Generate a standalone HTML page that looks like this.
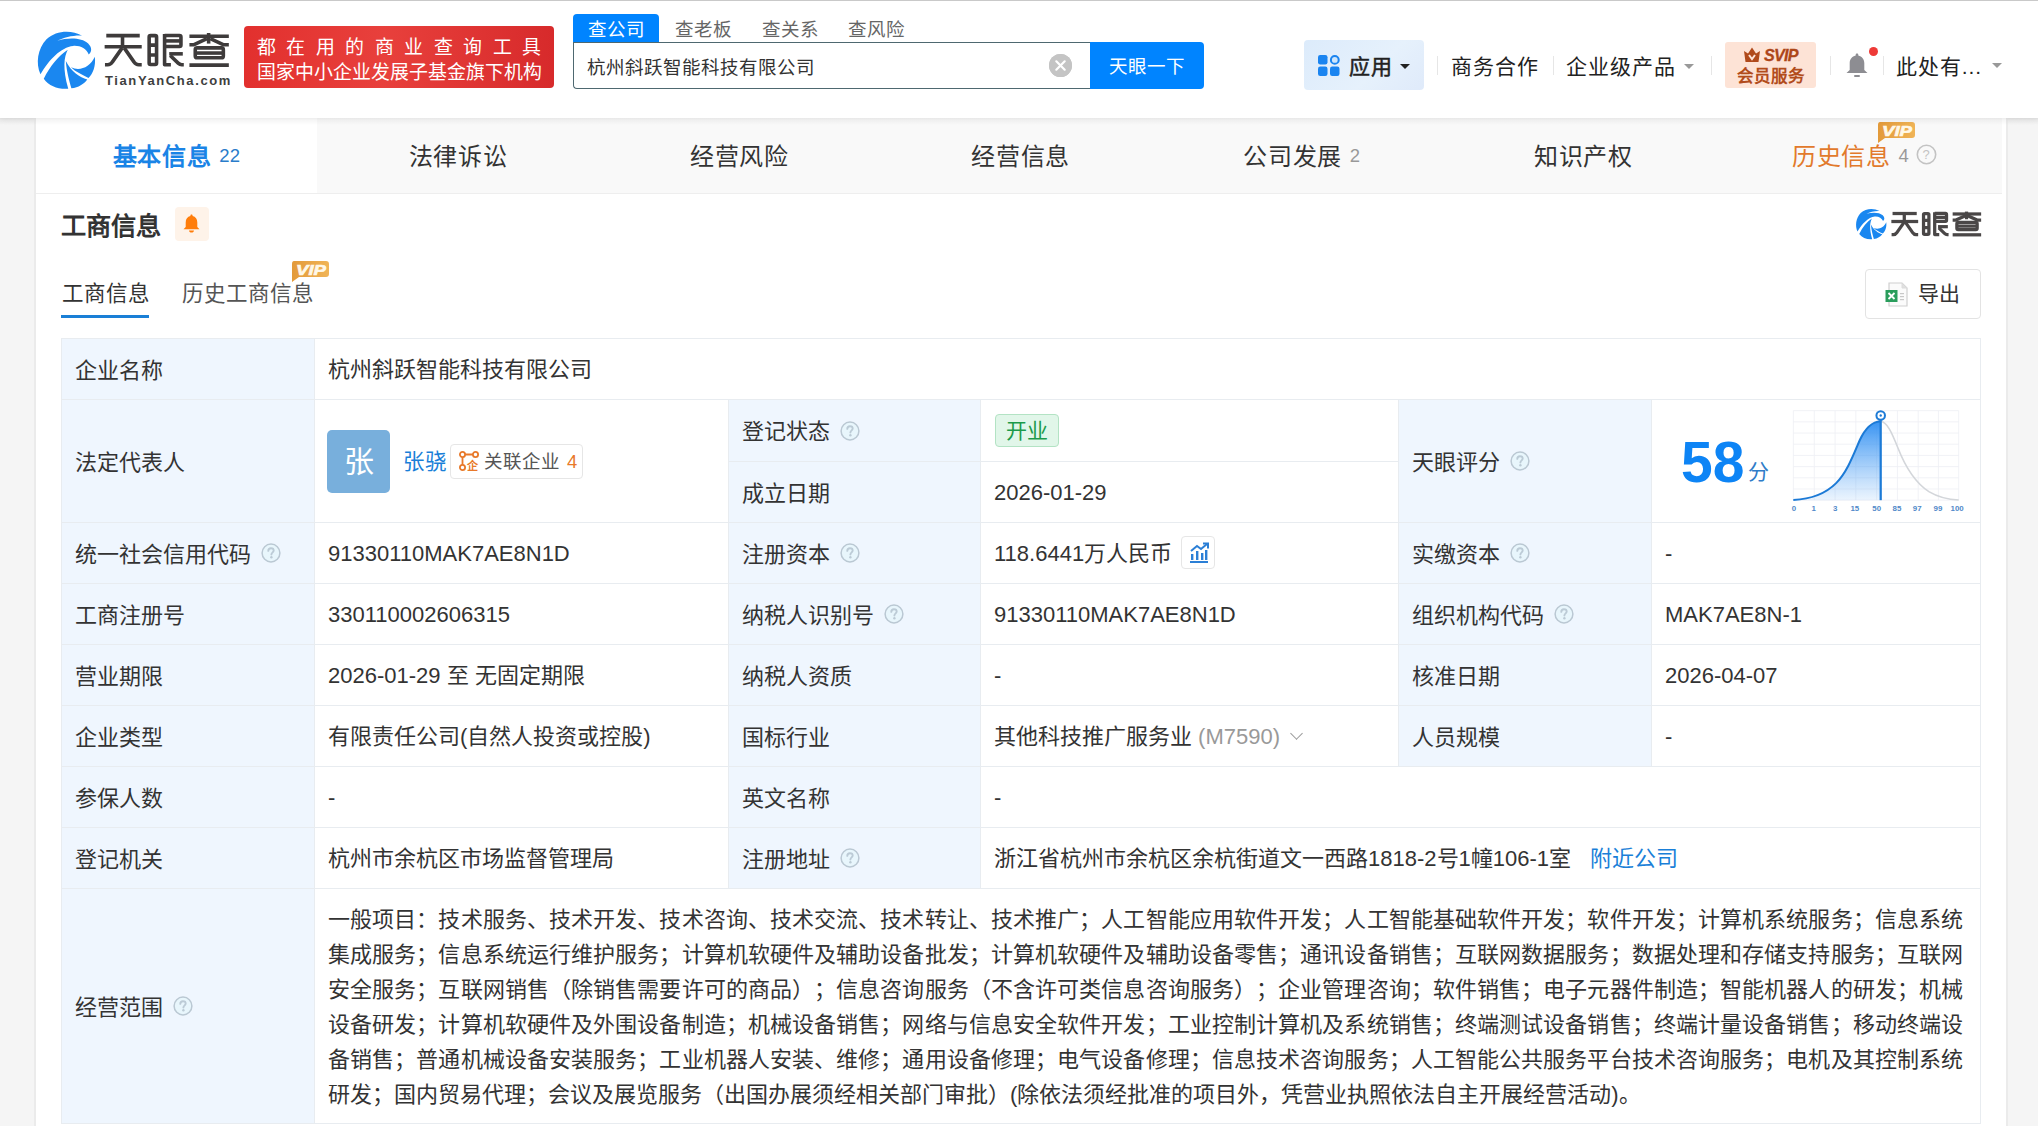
<!DOCTYPE html>
<html lang="zh-CN"><head><meta charset="utf-8">
<style>
*{margin:0;padding:0;box-sizing:border-box}
html,body{text-spacing-trim:space-all;width:2038px;height:1126px;overflow:hidden;background:#f5f5f5;font-family:"Liberation Sans",sans-serif;color:#333}
.abs{position:absolute}
#hdr{position:absolute;left:0;top:0;width:2038px;height:118px;background:#fff;border-top:1px solid #c9c9c9;box-shadow:0 2px 6px rgba(0,0,0,0.06)}
.brand{position:absolute;left:104px;top:25px;font-size:34px;font-weight:bold;color:#3e3e3e;letter-spacing:5.5px;line-height:50px;white-space:nowrap;transform:scaleX(1.08);transform-origin:0 0}
.brand-en{position:absolute;left:105px;top:73px;font-size:13px;font-weight:bold;color:#3e3e3e;letter-spacing:1.6px;line-height:16px;white-space:nowrap}
.banner{position:absolute;left:244px;top:26px;width:310px;height:62px;border-radius:4px;background:linear-gradient(90deg,#e2302e,#e8403c 45%,#d72a2b);color:#fff;font-size:18.9px;line-height:25px}
.banner .l1{position:absolute;left:13px;top:33px;width:284px;text-align:justify;text-align-last:justify;white-space:nowrap}
.stab{position:absolute;top:14px;height:28px;font-size:18.5px;line-height:31px;color:#666;white-space:nowrap}
.stab.on{background:#0084ff;color:#fff;border-radius:4px 4px 0 0;width:86px;text-align:center}
.search{position:absolute;left:573px;top:42px;width:518px;height:47px;border:1px solid #4e6870;border-right:none;border-radius:0 0 0 4px;background:#fff}
.search .txt{position:absolute;left:13px;top:1px;line-height:47px;font-size:18.5px;color:#333;white-space:nowrap}
.clear{position:absolute;left:1049px;top:54px;width:23px;height:23px;border-radius:50%;background:#c3c3c3}
.btn{position:absolute;left:1090px;top:42px;width:114px;height:47px;background:#0084ff;border-radius:0 4px 4px 0;color:#fff;font-size:18.5px;line-height:49px;text-align:center;letter-spacing:0px}
.nav{position:absolute;top:41px;height:50px;line-height:52px;font-size:21px;letter-spacing:0.9px;color:#222;white-space:nowrap}
.sep{position:absolute;top:56px;width:1px;height:19px;background:#e6e6e6}
.tri{position:absolute;width:0;height:0;border-left:5px solid transparent;border-right:5px solid transparent;border-top:5px solid #999}

#card{position:absolute;left:34px;top:118px;width:1974px;height:1010px;background:#fff;border-left:2px solid #ebebeb;border-right:2px solid #ebebeb}
.tabs{position:absolute;left:36px;top:118px;width:1966px;height:76px;background:#f9f9f9;border-bottom:1px solid #eeeeee}
.tab{position:absolute;top:0;height:75px;width:281.3px;line-height:77px;text-align:center;font-size:24px;letter-spacing:0.6px;color:#333;white-space:nowrap}
.tab.on{background:#fff;color:#1a84e6;font-weight:bold}
.tab .n{font-size:18.5px;font-weight:normal;color:#999;margin-left:8px;position:relative;top:-3.5px;letter-spacing:0.3px}
.tab.on .n{color:#2a7cca}

.sec-title{position:absolute;left:61px;top:206px;font-size:25.2px;font-weight:bold;color:#333;line-height:40px;white-space:nowrap}
.bellbox{position:absolute;left:175px;top:207px;width:34px;height:34px;border-radius:4px;background:#fef3e9}
.subtab{position:absolute;top:274px;line-height:40px;font-size:21.5px;color:#333;white-space:nowrap}
.uline{position:absolute;left:61px;top:315px;width:88px;height:3px;background:#1a7fd6}
.export{position:absolute;left:1865px;top:269px;width:116px;height:50px;border:1px solid #e3e3e3;border-radius:4px;background:#fff}
.export .t{position:absolute;left:52px;top:0;line-height:48px;font-size:21px;color:#333}

/* table */
.cell{position:absolute;border:1px solid #e8ecf0;font-size:22px;line-height:28px;color:#333;white-space:nowrap;display:flex;align-items:center}
.lab{background:#eff6fe;padding-left:13px;padding-top:3px}
.val{background:#fff;padding-left:13px;padding-top:2.5px}
.q{display:inline-block;width:20px;height:20px;margin-left:10px;position:relative;top:-1.5px}
.badge{display:inline-block;position:relative;top:-1px;left:1px;height:33px;line-height:31px;padding:0 10px;border:1px solid #b3e3c4;background:#e1f6e9;color:#1c9a4a;border-radius:4px;font-size:21px}
.trend{display:inline-block;position:relative;top:-1.5px;width:34px;height:33px;border:1px solid #e6e6e6;border-radius:4px;margin-left:9px}
.gray{color:#999}
.chev{display:inline-block;width:9px;height:9px;border-right:1.6px solid #999;border-bottom:1.6px solid #999;transform:rotate(45deg);margin-left:12px;position:relative;top:-4px}
.link{color:#1a7fd8;margin-left:19px}
.scope{position:absolute;left:328px;top:902px;width:1635px;font-size:22px;line-height:35px;color:#333}
.scope div{text-align:justify;text-align-last:justify;white-space:nowrap;height:35px}
.scope div.last{text-align-last:left}
</style></head>
<body>
<div id="hdr"></div>
<!-- logo -->
<svg class="abs" style="left:32px;top:26px" width="68" height="68" viewBox="0 0 1126 1126">
 <g fill="#1a87f0">
  <path d="M140,800 C60,620 90,380 240,220 C400,70 650,60 830,160 C700,150 520,190 420,245 C600,190 820,190 930,290 C990,350 1000,420 940,470 C900,380 800,320 680,330 C480,350 280,560 140,800 Z"/>
  <path d="M195,872 C300,660 440,490 592,392 C530,510 505,700 600,1038 C430,1050 285,995 195,872 Z"/>
  <path d="M560,580 C575,760 615,900 652,1032 C770,1020 860,960 915,885 C790,850 650,760 560,580 Z"/>
  <path d="M645,685 C790,750 960,690 1040,510 C1060,660 1010,790 935,862 C830,810 720,760 645,685 Z"/>
 </g>
</svg>
<svg class="abs" style="left:100px;top:28px" width="135" height="44" viewBox="0 0 2038 664"><g fill="none" stroke="#3e3b3b" stroke-width="54" stroke-linejoin="round">
 <path d="M95,115 H600"/>
 <path d="M70,282 H630"/>
 <path d="M340,90 V290"/>
 <path d="M335,300 L185,515 Q160,555 115,555 H75"/>
 <path d="M365,300 L515,515 Q540,555 585,555 H630"/>
 <rect x="742" y="115" width="112" height="435" rx="22"/>
 <path d="M742,258 H854 M742,408 H854"/>
 <path d="M975,90 V555 H1070"/>
 <path d="M975,112 H1200 Q1222,112 1222,134 V255 Q1222,278 1200,278 H975"/>
 <path d="M975,195 H1222"/>
 <path d="M1045,390 H1250"/>
 <path d="M1060,415 L1180,530 Q1205,555 1235,555 H1265"/>
 <path d="M1350,125 H1945"/>
 <path d="M1640,75 V235"/>
 <path d="M1615,160 L1420,252 H1350"/>
 <path d="M1665,160 L1860,252 H1945"/>
 <rect x="1438" y="300" width="424" height="150" rx="28"/>
 <path d="M1438,378 H1862"/>
 <path d="M1350,560 H1945"/>
</g></svg>
<div class="brand-en">TianYanCha.com</div>
<div class="banner"><div class="l1" style="top:9px">都在用的商业查询工具</div><div class="l1" style="top:34px">国家中小企业发展子基金旗下机构</div></div>

<div class="stab on" style="left:573px">查公司</div>
<div class="stab" style="left:675px">查老板</div>
<div class="stab" style="left:762px">查关系</div>
<div class="stab" style="left:848px">查风险</div>
<div class="search"><div class="txt">杭州斜跃智能科技有限公司</div></div>
<div class="clear"></div>
<div class="btn">天眼一下</div>

<div class="abs" style="left:1304px;top:40px;width:120px;height:50px;border-radius:4px;background:linear-gradient(135deg,#dcebfb,#e6f1fc 60%,#dfeafa)"></div>
<div class="nav" style="left:1349px;-webkit-text-stroke:0.5px #222">应用</div>
<div class="tri" style="left:1400px;top:64px;border-top-color:#222"></div>
<div class="sep" style="left:1437px"></div>
<div class="nav" style="left:1451px">商务合作</div>
<div class="sep" style="left:1553px"></div>
<div class="nav" style="left:1566px">企业级产品</div>
<div class="tri" style="left:1684px;top:64px"></div>
<div class="sep" style="left:1711px"></div>
<div class="abs" style="left:1725px;top:42px;width:91px;height:46px;border-radius:3px;background:#fde3d6"></div>
<div class="sep" style="left:1830px"></div>
<div class="sep" style="left:1883px"></div>
<div class="nav" style="left:1896px">此处有...</div>
<div class="tri" style="left:1992px;top:63px"></div>


<svg class="abs" style="left:1049px;top:54px" width="23" height="23" viewBox="0 0 23 23"><circle cx="11.5" cy="11.5" r="11.5" fill="#c4c4c4"/><path d="M7.3,7.3 L15.7,15.7 M15.7,7.3 L7.3,15.7" stroke="#fff" stroke-width="2.2" stroke-linecap="round"/></svg>
<svg class="abs" style="left:1318px;top:55px" width="22" height="21" viewBox="0 0 22 21"><rect x="0" y="0" width="9.5" height="9.5" rx="2.2" fill="#1a84f0"/><circle cx="16.8" cy="4.9" r="3.9" fill="#cfe6fb" stroke="#1a84f0" stroke-width="2"/><rect x="0" y="11.5" width="9.5" height="9.5" rx="2.2" fill="#1a84f0"/><rect x="12" y="11.5" width="9.5" height="9.5" rx="2.2" fill="#1a84f0"/></svg>
<svg class="abs" style="left:1743px;top:47px" width="18" height="16" viewBox="0 0 18 16"><path d="M1,4 L5,6.5 L9,0.5 L13,6.5 L17,4 L15.5,15 L2.5,15 Z" fill="#b04a1b"/><path d="M6,8 L9,12 L12,8" stroke="#fde4d8" stroke-width="2" fill="none"/></svg>
<div class="abs" style="left:1764px;top:45px;font-size:17px;font-weight:bold;font-style:italic;color:#ad4619;line-height:22px;letter-spacing:-0.8px;transform:scaleX(0.95);transform-origin:0 0;-webkit-text-stroke:0.3px #ad4619">SVIP</div>
<div class="abs" style="left:1737px;top:64px;font-size:16.5px;font-weight:bold;color:#b24c1c;line-height:24px;white-space:nowrap">会员服务</div>
<svg class="abs" style="left:1845px;top:52px" width="24" height="26" viewBox="0 0 24 26"><path d="M12,1.5 C12.8,1.5 13.3,2 13.3,2.8 L13.3,3.4 C17,4.2 19.3,7.2 19.3,11.2 L19.3,18 L22.5,21 L1.5,21 L4.7,18 L4.7,11.2 C4.7,7.2 7,4.2 10.7,3.4 L10.7,2.8 C10.7,2 11.2,1.5 12,1.5 Z" fill="#8d8d92"/><rect x="9" y="23" width="6" height="2" rx="1" fill="#8d8d92"/></svg>
<div class="abs" style="left:1869px;top:47px;width:9px;height:9px;border-radius:50%;background:#ee3a37"></div>
<div id="card"></div>
<div class="tabs">
  <div class="tab on" style="left:0">基本信息<span class="n">22</span></div>
  <div class="tab" style="left:281.3px">法律诉讼</div>
  <div class="tab" style="left:562.6px">经营风险</div>
  <div class="tab" style="left:843.9px">经营信息</div>
  <div class="tab" style="left:1125.2px">公司发展<span class="n">2</span></div>
  <div class="tab" style="left:1406.5px">知识产权</div>
  <div class="tab" style="left:1687.8px;color:#e27a2c">历史信息<span class="n">4</span><svg style="vertical-align:middle;margin-left:6.5px;position:relative;top:-4px" width="21" height="21" viewBox="0 0 21 21"><circle cx="10.5" cy="10.5" r="9.2" fill="none" stroke="#c3c3c3" stroke-width="1.6"/><text x="10.5" y="15.2" text-anchor="middle" font-family="Liberation Sans" font-size="13" fill="#c3c3c3">?</text></svg></div>
</div>

<div class="sec-title">工商信息</div>
<div class="bellbox"></div>
<div class="subtab" style="left:62px">工商信息</div>
<div class="uline"></div>
<div class="subtab" style="left:182px;color:#555">历史工商信息</div>
<div class="export"><div class="t">导出</div></div>

<!-- TABLE -->
<div class="cell lab" style="left:61px;top:338px;width:254px;height:62px">企业名称</div>
<div class="cell val" style="left:314px;top:338px;width:1667px;height:62px">杭州斜跃智能科技有限公司</div>
<div class="cell lab" style="left:61px;top:399px;width:254px;height:124px">法定代表人</div>
<div class="cell val" style="left:314px;top:399px;width:415px;height:124px"><!--legal--></div>
<div class="cell lab" style="left:728px;top:399px;width:253px;height:63px">登记状态<svg class="q" viewBox="0 0 20 20"><circle cx="10" cy="10" r="8.9" fill="#e8f6fc" stroke="#bac8d3" stroke-width="1.5"/><path d="M7.3,7.9 C7.3,6.2 8.5,5.2 10,5.2 C11.6,5.2 12.7,6.2 12.7,7.6 C12.7,9.3 10.4,9.6 10.4,11.6" fill="none" stroke="#bccbd6" stroke-width="1.9" stroke-linecap="round"/><circle cx="10.4" cy="14.3" r="1.2" fill="#bccbd6"/></svg></div>
<div class="cell val" style="left:980px;top:399px;width:419px;height:63px"><span class="badge">开业</span></div>
<div class="cell lab" style="left:728px;top:461px;width:253px;height:62px">成立日期</div>
<div class="cell val" style="left:980px;top:461px;width:419px;height:62px">2026-01-29</div>
<div class="cell lab" style="left:1398px;top:399px;width:254px;height:124px">天眼评分<svg class="q" viewBox="0 0 20 20"><circle cx="10" cy="10" r="8.9" fill="#e8f6fc" stroke="#bac8d3" stroke-width="1.5"/><path d="M7.3,7.9 C7.3,6.2 8.5,5.2 10,5.2 C11.6,5.2 12.7,6.2 12.7,7.6 C12.7,9.3 10.4,9.6 10.4,11.6" fill="none" stroke="#bccbd6" stroke-width="1.9" stroke-linecap="round"/><circle cx="10.4" cy="14.3" r="1.2" fill="#bccbd6"/></svg></div>
<div class="cell val" style="left:1651px;top:399px;width:330px;height:124px"><!--score--></div>
<div class="cell lab" style="left:61px;top:522px;width:254px;height:62px">统一社会信用代码<svg class="q" viewBox="0 0 20 20"><circle cx="10" cy="10" r="8.9" fill="#e8f6fc" stroke="#bac8d3" stroke-width="1.5"/><path d="M7.3,7.9 C7.3,6.2 8.5,5.2 10,5.2 C11.6,5.2 12.7,6.2 12.7,7.6 C12.7,9.3 10.4,9.6 10.4,11.6" fill="none" stroke="#bccbd6" stroke-width="1.9" stroke-linecap="round"/><circle cx="10.4" cy="14.3" r="1.2" fill="#bccbd6"/></svg></div>
<div class="cell val" style="left:314px;top:522px;width:415px;height:62px">91330110MAK7AE8N1D</div>
<div class="cell lab" style="left:728px;top:522px;width:253px;height:62px">注册资本<svg class="q" viewBox="0 0 20 20"><circle cx="10" cy="10" r="8.9" fill="#e8f6fc" stroke="#bac8d3" stroke-width="1.5"/><path d="M7.3,7.9 C7.3,6.2 8.5,5.2 10,5.2 C11.6,5.2 12.7,6.2 12.7,7.6 C12.7,9.3 10.4,9.6 10.4,11.6" fill="none" stroke="#bccbd6" stroke-width="1.9" stroke-linecap="round"/><circle cx="10.4" cy="14.3" r="1.2" fill="#bccbd6"/></svg></div>
<div class="cell val" style="left:980px;top:522px;width:419px;height:62px">118.6441万人民币<i class="trend"></i></div>
<div class="cell lab" style="left:1398px;top:522px;width:254px;height:62px">实缴资本<svg class="q" viewBox="0 0 20 20"><circle cx="10" cy="10" r="8.9" fill="#e8f6fc" stroke="#bac8d3" stroke-width="1.5"/><path d="M7.3,7.9 C7.3,6.2 8.5,5.2 10,5.2 C11.6,5.2 12.7,6.2 12.7,7.6 C12.7,9.3 10.4,9.6 10.4,11.6" fill="none" stroke="#bccbd6" stroke-width="1.9" stroke-linecap="round"/><circle cx="10.4" cy="14.3" r="1.2" fill="#bccbd6"/></svg></div>
<div class="cell val" style="left:1651px;top:522px;width:330px;height:62px">-</div>
<div class="cell lab" style="left:61px;top:583px;width:254px;height:62px">工商注册号</div>
<div class="cell val" style="left:314px;top:583px;width:415px;height:62px">330110002606315</div>
<div class="cell lab" style="left:728px;top:583px;width:253px;height:62px">纳税人识别号<svg class="q" viewBox="0 0 20 20"><circle cx="10" cy="10" r="8.9" fill="#e8f6fc" stroke="#bac8d3" stroke-width="1.5"/><path d="M7.3,7.9 C7.3,6.2 8.5,5.2 10,5.2 C11.6,5.2 12.7,6.2 12.7,7.6 C12.7,9.3 10.4,9.6 10.4,11.6" fill="none" stroke="#bccbd6" stroke-width="1.9" stroke-linecap="round"/><circle cx="10.4" cy="14.3" r="1.2" fill="#bccbd6"/></svg></div>
<div class="cell val" style="left:980px;top:583px;width:419px;height:62px">91330110MAK7AE8N1D</div>
<div class="cell lab" style="left:1398px;top:583px;width:254px;height:62px">组织机构代码<svg class="q" viewBox="0 0 20 20"><circle cx="10" cy="10" r="8.9" fill="#e8f6fc" stroke="#bac8d3" stroke-width="1.5"/><path d="M7.3,7.9 C7.3,6.2 8.5,5.2 10,5.2 C11.6,5.2 12.7,6.2 12.7,7.6 C12.7,9.3 10.4,9.6 10.4,11.6" fill="none" stroke="#bccbd6" stroke-width="1.9" stroke-linecap="round"/><circle cx="10.4" cy="14.3" r="1.2" fill="#bccbd6"/></svg></div>
<div class="cell val" style="left:1651px;top:583px;width:330px;height:62px">MAK7AE8N-1</div>
<div class="cell lab" style="left:61px;top:644px;width:254px;height:62px">营业期限</div>
<div class="cell val" style="left:314px;top:644px;width:415px;height:62px">2026-01-29 至 无固定期限</div>
<div class="cell lab" style="left:728px;top:644px;width:253px;height:62px">纳税人资质</div>
<div class="cell val" style="left:980px;top:644px;width:419px;height:62px">-</div>
<div class="cell lab" style="left:1398px;top:644px;width:254px;height:62px">核准日期</div>
<div class="cell val" style="left:1651px;top:644px;width:330px;height:62px">2026-04-07</div>
<div class="cell lab" style="left:61px;top:705px;width:254px;height:62px">企业类型</div>
<div class="cell val" style="left:314px;top:705px;width:415px;height:62px">有限责任公司(自然人投资或控股)</div>
<div class="cell lab" style="left:728px;top:705px;width:253px;height:62px">国标行业</div>
<div class="cell val" style="left:980px;top:705px;width:419px;height:62px">其他科技推广服务业<span class="gray">&nbsp;(M7590)</span><i class="chev"></i></div>
<div class="cell lab" style="left:1398px;top:705px;width:254px;height:62px">人员规模</div>
<div class="cell val" style="left:1651px;top:705px;width:330px;height:62px">-</div>
<div class="cell lab" style="left:61px;top:766px;width:254px;height:62px">参保人数</div>
<div class="cell val" style="left:314px;top:766px;width:415px;height:62px">-</div>
<div class="cell lab" style="left:728px;top:766px;width:253px;height:62px">英文名称</div>
<div class="cell val" style="left:980px;top:766px;width:1001px;height:62px">-</div>
<div class="cell lab" style="left:61px;top:827px;width:254px;height:62px">登记机关</div>
<div class="cell val" style="left:314px;top:827px;width:415px;height:62px">杭州市余杭区市场监督管理局</div>
<div class="cell lab" style="left:728px;top:827px;width:253px;height:62px">注册地址<svg class="q" viewBox="0 0 20 20"><circle cx="10" cy="10" r="8.9" fill="#e8f6fc" stroke="#bac8d3" stroke-width="1.5"/><path d="M7.3,7.9 C7.3,6.2 8.5,5.2 10,5.2 C11.6,5.2 12.7,6.2 12.7,7.6 C12.7,9.3 10.4,9.6 10.4,11.6" fill="none" stroke="#bccbd6" stroke-width="1.9" stroke-linecap="round"/><circle cx="10.4" cy="14.3" r="1.2" fill="#bccbd6"/></svg></div>
<div class="cell val" style="left:980px;top:827px;width:1001px;height:62px">浙江省杭州市余杭区余杭街道文一西路1818-2号1幢106-1室<span class="link">附近公司</span></div>
<div class="cell lab" style="left:61px;top:888px;width:254px;height:236px">经营范围<svg class="q" viewBox="0 0 20 20"><circle cx="10" cy="10" r="8.9" fill="#e8f6fc" stroke="#bac8d3" stroke-width="1.5"/><path d="M7.3,7.9 C7.3,6.2 8.5,5.2 10,5.2 C11.6,5.2 12.7,6.2 12.7,7.6 C12.7,9.3 10.4,9.6 10.4,11.6" fill="none" stroke="#bccbd6" stroke-width="1.9" stroke-linecap="round"/><circle cx="10.4" cy="14.3" r="1.2" fill="#bccbd6"/></svg></div>
<div class="cell val" style="left:314px;top:888px;width:1667px;height:236px"></div>
<div class="scope">
<div>一般项目：技术服务、技术开发、技术咨询、技术交流、技术转让、技术推广；人工智能应用软件开发；人工智能基础软件开发；软件开发；计算机系统服务；信息系统</div>
<div>集成服务；信息系统运行维护服务；计算机软硬件及辅助设备批发；计算机软硬件及辅助设备零售；通讯设备销售；互联网数据服务；数据处理和存储支持服务；互联网</div>
<div>安全服务；互联网销售（除销售需要许可的商品）；信息咨询服务（不含许可类信息咨询服务）；企业管理咨询；软件销售；电子元器件制造；智能机器人的研发；机械</div>
<div>设备研发；计算机软硬件及外围设备制造；机械设备销售；网络与信息安全软件开发；工业控制计算机及系统销售；终端测试设备销售；终端计量设备销售；移动终端设</div>
<div>备销售；普通机械设备安装服务；工业机器人安装、维修；通用设备修理；电气设备修理；信息技术咨询服务；人工智能公共服务平台技术咨询服务；电机及其控制系统</div>
<div class="last">研发；国内贸易代理；会议及展览服务（出国办展须经相关部门审批）(除依法须经批准的项目外，凭营业执照依法自主开展经营活动)。</div>
</div>
<svg class="abs" style="left:1877px;top:122px" width="38" height="22" viewBox="0 0 38 22"><defs><linearGradient id="vg1877" x1="0" y1="0" x2="1" y2="0"><stop offset="0" stop-color="#e39a3a"/><stop offset="1" stop-color="#f0b457"/></linearGradient></defs><path d="M3,0 L35,0 Q38,0 38,3 L38,13 Q38,16 35,16 L8,16 L1,21 L1,3 Q1,0 3,0 Z" fill="url(#vg1877)"/><text x="5" y="13.8" font-family="Liberation Sans" font-weight="bold" font-style="italic" font-size="14.5" fill="#fff8e8" stroke="#fff8e8" stroke-width="0.6" textLength="30" lengthAdjust="spacingAndGlyphs">VIP</text></svg>
<svg class="abs" style="left:291px;top:261px" width="38" height="22" viewBox="0 0 38 22"><defs><linearGradient id="vg291" x1="0" y1="0" x2="1" y2="0"><stop offset="0" stop-color="#e39a3a"/><stop offset="1" stop-color="#f0b457"/></linearGradient></defs><path d="M3,0 L35,0 Q38,0 38,3 L38,13 Q38,16 35,16 L8,16 L1,21 L1,3 Q1,0 3,0 Z" fill="url(#vg291)"/><text x="5" y="13.8" font-family="Liberation Sans" font-weight="bold" font-style="italic" font-size="14.5" fill="#fff8e8" stroke="#fff8e8" stroke-width="0.6" textLength="30" lengthAdjust="spacingAndGlyphs">VIP</text></svg>

<svg class="abs" style="left:183px;top:214px" width="17" height="19" viewBox="0 0 17 19"><path d="M8.5,0.5 C9.2,0.5 9.6,1 9.6,1.6 L9.6,2.1 C12.6,2.7 14.3,5.2 14.3,8.4 L14.3,13 L16.5,15.3 L0.5,15.3 L2.7,13 L2.7,8.4 C2.7,5.2 4.4,2.7 7.4,2.1 L7.4,1.6 C7.4,1 7.8,0.5 8.5,0.5 Z" fill="#ff7d0a"/><path d="M6,16.5 L11,16.5 C11,17.8 9.9,18.6 8.5,18.6 C7.1,18.6 6,17.8 6,16.5 Z" fill="#ff7d0a"/></svg>
<svg class="abs" style="left:1852.5px;top:206.4px" width="36" height="36" viewBox="0 0 1126 1126">
 <g fill="#1a87f0">
  <path d="M140,800 C60,620 90,380 240,220 C400,70 650,60 830,160 C700,150 520,190 420,245 C600,190 820,190 930,290 C990,350 1000,420 940,470 C900,380 800,320 680,330 C480,350 280,560 140,800 Z"/>
  <path d="M195,872 C300,660 440,490 592,392 C530,510 505,700 600,1038 C430,1050 285,995 195,872 Z"/>
  <path d="M560,580 C575,760 615,900 652,1032 C770,1020 860,960 915,885 C790,850 650,760 560,580 Z"/>
  <path d="M645,685 C790,750 960,690 1040,510 C1060,660 1010,790 935,862 C830,810 720,760 645,685 Z"/>
 </g>
</svg>
<svg class="abs" style="left:1887.6px;top:208.4px" width="97.6" height="31.8" viewBox="0 0 2038 664"><g fill="none" stroke="#4a4747" stroke-width="68" stroke-linejoin="round">
 <path d="M95,115 H600"/>
 <path d="M70,282 H630"/>
 <path d="M340,90 V290"/>
 <path d="M335,300 L185,515 Q160,555 115,555 H75"/>
 <path d="M365,300 L515,515 Q540,555 585,555 H630"/>
 <rect x="742" y="115" width="112" height="435" rx="22"/>
 <path d="M742,258 H854 M742,408 H854"/>
 <path d="M975,90 V555 H1070"/>
 <path d="M975,112 H1200 Q1222,112 1222,134 V255 Q1222,278 1200,278 H975"/>
 <path d="M975,195 H1222"/>
 <path d="M1045,390 H1250"/>
 <path d="M1060,415 L1180,530 Q1205,555 1235,555 H1265"/>
 <path d="M1350,125 H1945"/>
 <path d="M1640,75 V235"/>
 <path d="M1615,160 L1420,252 H1350"/>
 <path d="M1665,160 L1860,252 H1945"/>
 <rect x="1438" y="300" width="424" height="150" rx="28"/>
 <path d="M1438,378 H1862"/>
 <path d="M1350,560 H1945"/>
</g></svg>
<svg class="abs" style="left:1885px;top:282px" width="24" height="25" viewBox="0 0 24 25"><path d="M4,1 L17,1 L22,6 L22,24 L4,24 Z" fill="#fbfbfb" stroke="#cfcfcf" stroke-width="1.2"/><path d="M17,1 L17,6 L22,6" fill="#e0e0e0" stroke="#dcdcdc" stroke-width="1"/><rect x="15" y="11" width="4" height="1.2" fill="#c8c8c8"/><rect x="15" y="14" width="4" height="1.2" fill="#c8c8c8"/><rect x="15" y="17" width="4" height="1.2" fill="#c8c8c8"/><rect x="0.5" y="8" width="12" height="12" fill="#2a9d5c"/><path d="M3.5,11 L9.5,17 M9.5,11 L3.5,17" stroke="#fff" stroke-width="1.8"/></svg>

<div class="abs" style="left:327px;top:430px;width:63px;height:63px;border-radius:5px;background:#78afdc;color:#fff;font-size:30px;line-height:63px;text-align:center">张</div>
<div class="abs" style="left:403px;top:442px;font-size:21.5px;line-height:40px;color:#1a7fd8;white-space:nowrap">张骁</div>
<div class="abs" style="left:450px;top:444px;width:133px;height:35px;border:1px solid #e6e6e6;border-radius:4px;background:#fff"></div>
<svg class="abs" style="left:459px;top:451px" width="20" height="20" viewBox="0 0 20 20"><g fill="none" stroke="#e8792a" stroke-width="1.8"><circle cx="3.5" cy="3.5" r="2.6"/><circle cx="16.5" cy="3.5" r="2.6"/><circle cx="3.5" cy="16.5" r="2.6"/><path d="M6.1,3.5 L13.9,3.5 M3.5,6.1 L3.5,13.9"/></g><text x="13" y="19" text-anchor="middle" font-size="11" font-weight="bold" fill="#e8792a">企</text></svg>
<div class="abs" style="left:484px;top:442px;font-size:18.5px;line-height:40px;color:#555;white-space:nowrap">关联企业<span style="color:#e8792a;margin-left:7px">4</span></div>
<div class="abs" style="left:1681px;top:429px;font-size:57px;font-weight:bold;color:#0d84f5;line-height:66px;letter-spacing:0px">58</div>
<div class="abs" style="left:1748px;top:455px;font-size:21px;color:#2f7cc8;line-height:34px">分</div>
<svg class="abs" style="left:1785px;top:400px" width="180" height="120" viewBox="0 0 1689 1126">
 <defs><linearGradient id="sg" x1="0" y1="0" x2="0" y2="1"><stop offset="0" stop-color="#2d8ef2" stop-opacity="0.95"/><stop offset="1" stop-color="#5aa6f5" stop-opacity="0.12"/></linearGradient></defs>
 <g stroke="#eef0f4" stroke-width="8">
  <path d="M78,100 V940 M275,100 V940 M470,100 V940 M665,100 V940 M860,100 V940 M1055,100 V940 M1250,100 V940 M1440,100 V940 M1630,100 V940"/>
  <path d="M78,100 H1630 M78,205 H1630 M78,310 H1630 M78,415 H1630 M78,520 H1630 M78,625 H1630 M78,730 H1630 M78,835 H1630 M78,940 H1630"/>
 </g>
 <path d="M78,938 C250,930 380,880 480,780 C580,680 640,520 700,380 C760,250 820,205 898,200 L898,940 L78,940 Z" fill="url(#sg)"/>
 <path d="M78,938 C250,930 380,880 480,780 C580,680 640,520 700,380 C760,250 820,205 898,200" fill="none" stroke="#1c7ad6" stroke-width="19"/>
 <path d="M898,200 C960,210 1000,300 1060,450 C1130,630 1230,780 1350,860 C1450,920 1540,935 1630,938" fill="none" stroke="#d3d6da" stroke-width="15"/>
 <path d="M898,150 V940" stroke="#1c7ad6" stroke-width="21"/>
 <circle cx="898" cy="145" r="40" fill="#fff" stroke="#1c7ad6" stroke-width="19"/>
 <circle cx="898" cy="145" r="11" fill="#1c7ad6"/>
 <g font-family="Liberation Sans" font-size="74" font-weight="bold" fill="#5189c9" text-anchor="middle">
  <text x="85" y="1045">0</text><text x="270" y="1045">1</text><text x="470" y="1045">3</text><text x="655" y="1045">15</text><text x="860" y="1045">50</text><text x="1050" y="1045">85</text><text x="1240" y="1045">97</text><text x="1435" y="1045">99</text><text x="1615" y="1045">100</text>
 </g>
</svg>
<svg class="abs" style="left:1188px;top:542px" width="22" height="22" viewBox="0 0 22 22"><g fill="#2b7fd6"><rect x="2" y="19" width="18" height="2"/><rect x="3" y="12" width="2.4" height="6"/><rect x="8" y="9" width="2.4" height="9"/><rect x="13" y="11" width="2.4" height="7"/><rect x="17" y="8" width="2.4" height="10"/></g><path d="M3,9 L9,4 L13,7 L19,2" fill="none" stroke="#2b7fd6" stroke-width="2"/><path d="M15,1.5 L20,1.5 L20,6.5" fill="none" stroke="#2b7fd6" stroke-width="2"/></svg>
<div class="abs" style="left:0;top:118px;width:2038px;height:7px;background:linear-gradient(180deg,rgba(0,0,0,0.07),rgba(0,0,0,0.035) 35%,rgba(0,0,0,0))"></div>
</body></html>
